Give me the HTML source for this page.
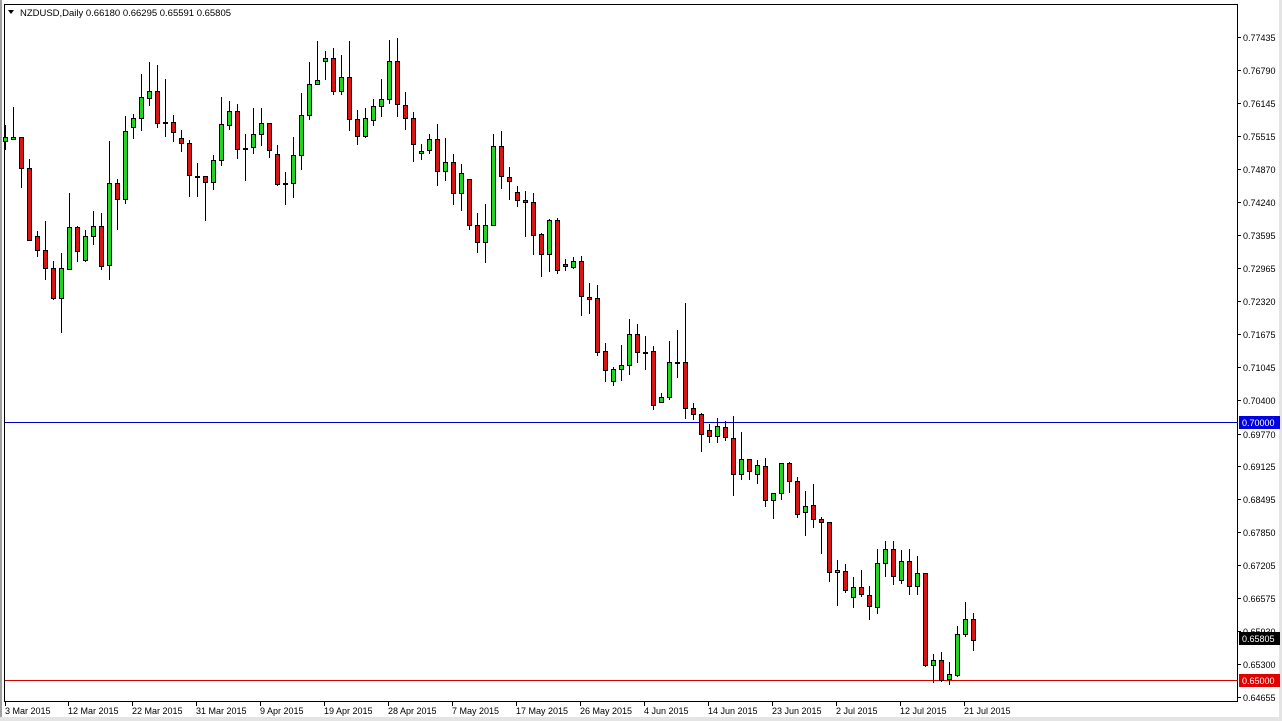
<!DOCTYPE html>
<html><head><meta charset="utf-8"><style>
body{margin:0;width:1282px;height:721px;overflow:hidden;background:#fff;font-family:"Liberation Sans",sans-serif}
svg{display:block}
text{font-family:"Liberation Sans",sans-serif;font-size:9px;fill:#000}
.g{fill:#22d322;stroke:#000;stroke-width:1}
.r{fill:#d81414;stroke:#000;stroke-width:1}
</style></head><body>
<svg width="1282" height="721" viewBox="0 0 1282 721" xmlns="http://www.w3.org/2000/svg">
<rect x="0" y="0" width="1282" height="721" fill="#fff"/>
<rect x="0" y="0" width="2" height="721" fill="#a0a0a0"/>
<rect x="0" y="717" width="1282" height="4" fill="#e4e4e4"/>
<rect x="1279" y="0" width="3" height="721" fill="#e4e4e4"/>
<rect x="4.5" y="4.5" width="1233" height="697" fill="none" stroke="#000"/>
<line x1="5" y1="422.5" x2="1238" y2="422.5" stroke="#0000c8"/>
<line x1="5" y1="680.5" x2="1238" y2="680.5" stroke="#d00000"/>
<path d="M8 10l3 4l3-4z" fill="#000"/>
<text x="20" y="16" textLength="211" lengthAdjust="spacingAndGlyphs">NZDUSD,Daily  0.66180 0.66295 0.65591 0.65805</text>
<g id="c"></g>
<g stroke="#000">
<path id="w" d=""/>
</g>
<g>
<text x="1243" y="41">0.77435</text><text x="1243" y="74">0.76790</text><text x="1243" y="107">0.76145</text><text x="1243" y="140">0.75515</text><text x="1243" y="173">0.74870</text><text x="1243" y="206">0.74240</text><text x="1243" y="239">0.73595</text><text x="1243" y="272">0.72965</text><text x="1243" y="305">0.72320</text><text x="1243" y="338">0.71675</text><text x="1243" y="371">0.71045</text><text x="1243" y="404">0.70400</text><text x="1243" y="438">0.69770</text><text x="1243" y="470">0.69125</text><text x="1243" y="503">0.68495</text><text x="1243" y="536">0.67850</text><text x="1243" y="569">0.67205</text><text x="1243" y="602">0.66575</text><text x="1243" y="635">0.65930</text><text x="1243" y="668">0.65300</text><text x="1243" y="701">0.64655</text>
</g>
<path stroke="#000" d="M1238 37.5h3M1238 70.5h3M1238 103.5h3M1238 136.5h3M1238 169.5h3M1238 202.5h3M1238 235.5h3M1238 268.5h3M1238 301.5h3M1238 334.5h3M1238 367.5h3M1238 400.5h3M1238 434.5h3M1238 466.5h3M1238 499.5h3M1238 532.5h3M1238 565.5h3M1238 598.5h3M1238 631.5h3M1238 664.5h3M1238 697.5h3"/>
<rect x="1239" y="416" width="41" height="13" fill="#0000e0"/><text x="1242" y="426" style="fill:#fff">0.70000</text>
<rect x="1239" y="632" width="41" height="13" fill="#000"/><text x="1242" y="642" style="fill:#fff">0.65805</text>
<rect x="1239" y="674" width="41" height="13" fill="#e00000"/><text x="1242" y="684" style="fill:#fff">0.65000</text>
<path stroke="#000" d="M5.5 702v4M68.5 702v4M132.5 702v4M196.5 702v4M260.5 702v4M324.5 702v4M388.5 702v4M452.5 702v4M516.5 702v4M580.5 702v4M644.5 702v4M708.5 702v4M772.5 702v4M836.5 702v4M900.5 702v4M964.5 702v4"/>
<g>
<text x="5" y="714">3 Mar 2015</text><text x="68" y="714">12 Mar 2015</text><text x="132" y="714">22 Mar 2015</text><text x="196" y="714">31 Mar 2015</text><text x="260" y="714">9 Apr 2015</text><text x="324" y="714">19 Apr 2015</text><text x="388" y="714">28 Apr 2015</text><text x="452" y="714">7 May 2015</text><text x="516" y="714">17 May 2015</text><text x="580" y="714">26 May 2015</text><text x="644" y="714">4 Jun 2015</text><text x="708" y="714">14 Jun 2015</text><text x="772" y="714">23 Jun 2015</text><text x="836" y="714">2 Jul 2015</text><text x="900" y="714">12 Jul 2015</text><text x="964" y="714">21 Jul 2015</text>
</g>
</svg>
<script>
var D=[[5,125,137,141,150,'g'],[13,107,137,139,140,'g'],[21,137,137,168,188,'r'],[29,159,168,240,240,'r'],[37,231,236,250,257,'r'],[45,221,250,268,280,'r'],[53,261,268,298,300,'r'],[61,253,268,298,333,'g'],[69,193,227,269,270,'g'],[77,226,227,251,262,'r'],[85,230,236,260,262,'g'],[93,211,226,236,245,'g'],[101,213,226,266,270,'r'],[109,141,183,265,280,'g'],[117,179,183,199,230,'r'],[125,116,131,199,204,'g'],[133,114,118,127,139,'g'],[141,74,97,118,131,'g'],[149,62,91,98,106,'g'],[157,65,91,123,128,'r'],[165,79,122,123,137,'g'],[173,115,122,132,142,'r'],[181,130,138,143,152,'r'],[189,140,143,175,197,'r'],[197,163,176,177,197,'g'],[205,176,176,182,221,'r'],[213,155,160,182,190,'g'],[221,97,124,160,166,'g'],[229,101,111,125,130,'g'],[237,104,111,149,159,'r'],[245,134,148,149,181,'g'],[253,108,134,147,154,'g'],[261,108,123,134,146,'g'],[269,123,123,150,158,'r'],[277,145,154,184,186,'r'],[285,172,183,184,205,'r'],[293,137,155,183,198,'g'],[301,93,115,155,170,'g'],[309,62,84,115,120,'g'],[317,41,80,84,85,'g'],[325,51,58,61,80,'g'],[333,48,58,91,95,'r'],[341,55,77,91,95,'g'],[349,41,77,119,131,'r'],[357,110,119,136,145,'r'],[365,108,118,136,138,'g'],[373,99,106,120,126,'g'],[381,79,99,106,117,'g'],[389,40,61,99,104,'g'],[397,38,61,104,117,'r'],[405,92,105,118,130,'r'],[413,112,118,144,162,'r'],[421,144,151,153,160,'g'],[429,134,139,150,154,'g'],[437,124,139,171,186,'r'],[445,138,162,171,181,'g'],[453,154,162,193,205,'r'],[461,164,173,193,211,'g'],[469,179,179,225,230,'r'],[477,213,225,242,253,'r'],[485,204,225,242,263,'g'],[493,134,146,225,225,'g'],[501,131,146,176,189,'r'],[509,167,177,181,200,'r'],[517,186,192,200,207,'r'],[525,191,200,202,237,'r'],[533,193,202,235,255,'r'],[541,233,234,254,277,'r'],[549,219,220,254,272,'g'],[557,218,220,270,274,'r'],[565,259,264,266,271,'r'],[573,257,261,267,269,'g'],[581,256,261,296,316,'r'],[589,283,297,299,314,'r'],[597,285,298,352,356,'r'],[605,343,351,370,382,'r'],[613,367,369,381,386,'g'],[621,345,365,369,381,'g'],[629,319,334,365,375,'g'],[637,324,334,352,363,'r'],[645,336,352,353,370,'r'],[653,346,351,405,410,'r'],[661,393,397,402,403,'g'],[669,341,362,397,400,'g'],[677,330,362,363,378,'g'],[685,303,362,408,419,'r'],[693,403,408,414,420,'r'],[701,413,414,434,452,'r'],[709,424,430,436,443,'r'],[717,418,426,436,443,'g'],[725,421,427,437,441,'r'],[733,416,438,474,496,'r'],[741,432,459,474,480,'g'],[749,459,459,471,480,'r'],[757,460,465,474,484,'g'],[765,458,466,500,507,'r'],[773,493,493,500,519,'g'],[781,463,463,493,500,'g'],[789,462,463,481,493,'r'],[797,477,481,514,518,'r'],[805,491,506,512,536,'g'],[813,484,505,519,528,'r'],[821,517,519,522,554,'r'],[829,522,522,572,582,'r'],[837,560,570,572,606,'g'],[845,564,571,590,593,'r'],[853,577,587,597,608,'g'],[861,570,587,594,597,'r'],[869,586,595,606,620,'r'],[877,549,563,607,614,'g'],[885,541,549,563,577,'g'],[893,541,549,576,585,'r'],[901,550,561,580,584,'g'],[909,549,561,586,595,'r'],[917,556,573,586,595,'g'],[925,573,573,665,667,'r'],[933,654,660,665,683,'g'],[941,652,660,680,682,'r'],[949,662,674,679,685,'g'],[957,626,634,675,677,'g'],[965,602,619,634,637,'g'],[973,613,619,640,651,'r']];
var w='',b='';
D.forEach(function(c){w+='M'+(c[0]+.5)+' '+c[1]+'V'+c[4];var h=Math.max(1,c[3]-c[2]);b+='<rect class="'+c[5]+'" x="'+(c[0]-1.5)+'" y="'+(c[2]+.5)+'" width="4" height="'+h+'"/>';});
document.getElementById('w').setAttribute('d',w);
var g=document.getElementById('c');g.parentNode.appendChild(g);
g.innerHTML=b;
</script>
</body></html>
